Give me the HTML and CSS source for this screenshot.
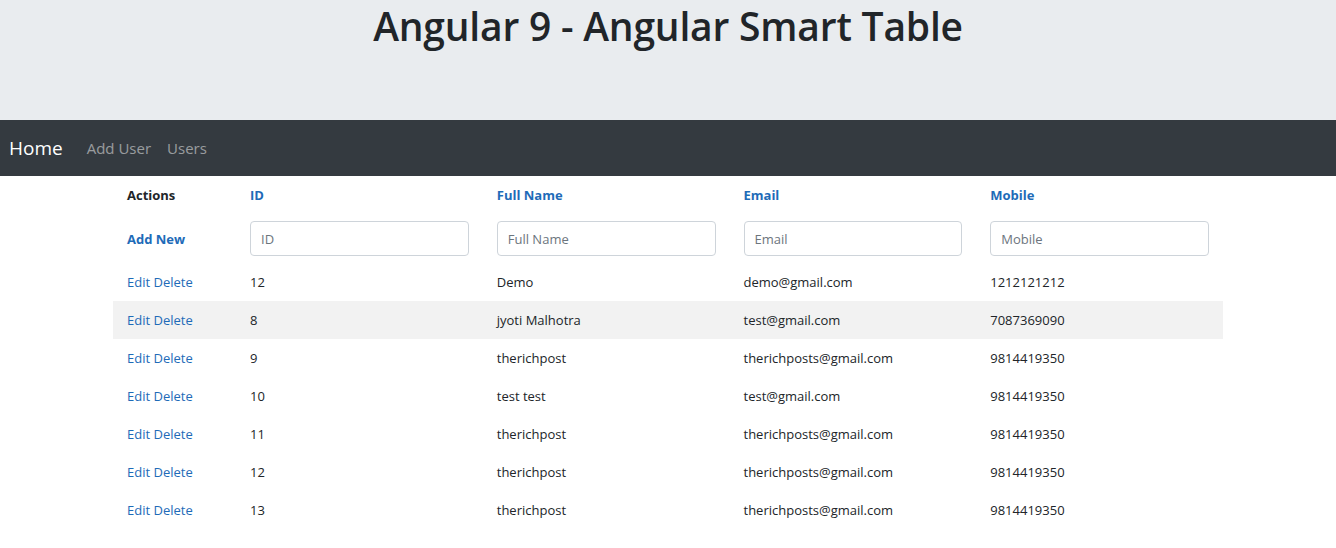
FILE: index.html
```html
<!DOCTYPE html>
<html lang="en">
<head>
    <meta charset="UTF-8">
    <meta name="viewport" content="width=device-width, initial-scale=1.0">
    <title>Angular Smart Table</title>
    <link rel="stylesheet" href="styles.css">
</head>
<body>

<div class="jumbotron">
    <h1>Angular 9 - Angular Smart Table</h1>
</div>

<nav class="navbar">
    <a class="brand" href="#">Home</a>
    <a class="nav-link" href="#">Add User</a>
    <a class="nav-link" href="#">Users</a>
</nav>

<div class="container">
    <table class="smart-table">
        <thead>
            <tr class="titles">
                <th class="col-actions">Actions</th>
                <th><a href="#">ID</a></th>
                <th><a href="#">Full Name</a></th>
                <th><a href="#">Email</a></th>
                <th><a href="#">Mobile</a></th>
            </tr>
            <tr class="filters">
                <th><a href="#">Add New</a></th>
                <th><input type="text" placeholder="ID"></th>
                <th><input type="text" placeholder="Full Name"></th>
                <th><input type="text" placeholder="Email"></th>
                <th><input type="text" placeholder="Mobile"></th>
            </tr>
        </thead>
        <tbody>
            <tr>
                <td><a href="#">Edit</a> <a href="#">Delete</a></td>
                <td>12</td>
                <td>Demo</td>
                <td>demo@gmail.com</td>
                <td>1212121212</td>
            </tr>
            <tr class="hovered">
                <td><a href="#">Edit</a> <a href="#">Delete</a></td>
                <td>8</td>
                <td>jyoti Malhotra</td>
                <td>test@gmail.com</td>
                <td>7087369090</td>
            </tr>
            <tr>
                <td><a href="#">Edit</a> <a href="#">Delete</a></td>
                <td>9</td>
                <td>therichpost</td>
                <td>therichposts@gmail.com</td>
                <td>9814419350</td>
            </tr>
            <tr>
                <td><a href="#">Edit</a> <a href="#">Delete</a></td>
                <td>10</td>
                <td>test test</td>
                <td>test@gmail.com</td>
                <td>9814419350</td>
            </tr>
            <tr>
                <td><a href="#">Edit</a> <a href="#">Delete</a></td>
                <td>11</td>
                <td>therichpost</td>
                <td>therichposts@gmail.com</td>
                <td>9814419350</td>
            </tr>
            <tr>
                <td><a href="#">Edit</a> <a href="#">Delete</a></td>
                <td>12</td>
                <td>therichpost</td>
                <td>therichposts@gmail.com</td>
                <td>9814419350</td>
            </tr>
            <tr>
                <td><a href="#">Edit</a> <a href="#">Delete</a></td>
                <td>13</td>
                <td>therichpost</td>
                <td>therichposts@gmail.com</td>
                <td>9814419350</td>
            </tr>
        </tbody>
    </table>
</div>

</body>
</html>
```

FILE: styles.css
```css
body {
    font-family: "Open Sans", "Noto Sans", sans-serif;
    color: #212529;
    background-color: #fff;
    margin: 0;
}
a {
    text-decoration: none;
}
.jumbotron {
    background-color: #e9ecef;
    height: 120px;
    box-sizing: border-box;
    padding-top: 2px;
}
.jumbotron h1 {
    margin: 0;
    text-align: center;
    font-size: 39px;
    font-weight: 600;
    line-height: 48px;
    letter-spacing: -0.2px;
}
.navbar {
    background-color: #343a40;
    height: 56px;
    display: flex;
    align-items: center;
    padding: 0 9px;
}
.brand {
    color: #fff;
    font-size: 19px;
    margin-right: 16px;
}
.nav-link {
    color: rgba(255, 255, 255, 0.5);
    font-size: 15px;
    padding: 0 8px;
}
.container {
    width: 1110px;
    margin: 0 auto;
}
.smart-table {
    width: 100%;
    border-collapse: collapse;
    font-size: 13px;
    table-layout: fixed;
}
.smart-table th,
.smart-table td {
    padding: 0 14px;
    text-align: left;
}
.smart-table .col-actions {
    width: 95px;
}
.titles th {
    height: 38px;
    font-weight: 700;
}
.titles th a,
.filters th a {
    color: #1e6bb8;
}
.filters th {
    height: 49px;
    font-weight: 700;
}
.filters input {
    width: 100%;
    box-sizing: border-box;
    height: 35px;
    border: 1px solid #ced4da;
    border-radius: 4px;
    padding: 0 10px;
    font-family: inherit;
    font-size: 13px;
    color: #495057;
}
.filters input::placeholder {
    color: #6c757d;
}
.smart-table td {
    height: 38px;
}
.smart-table td a {
    color: #1e6bb8;
}
.smart-table tbody tr.hovered {
    background-color: #f2f2f2;
}
```
